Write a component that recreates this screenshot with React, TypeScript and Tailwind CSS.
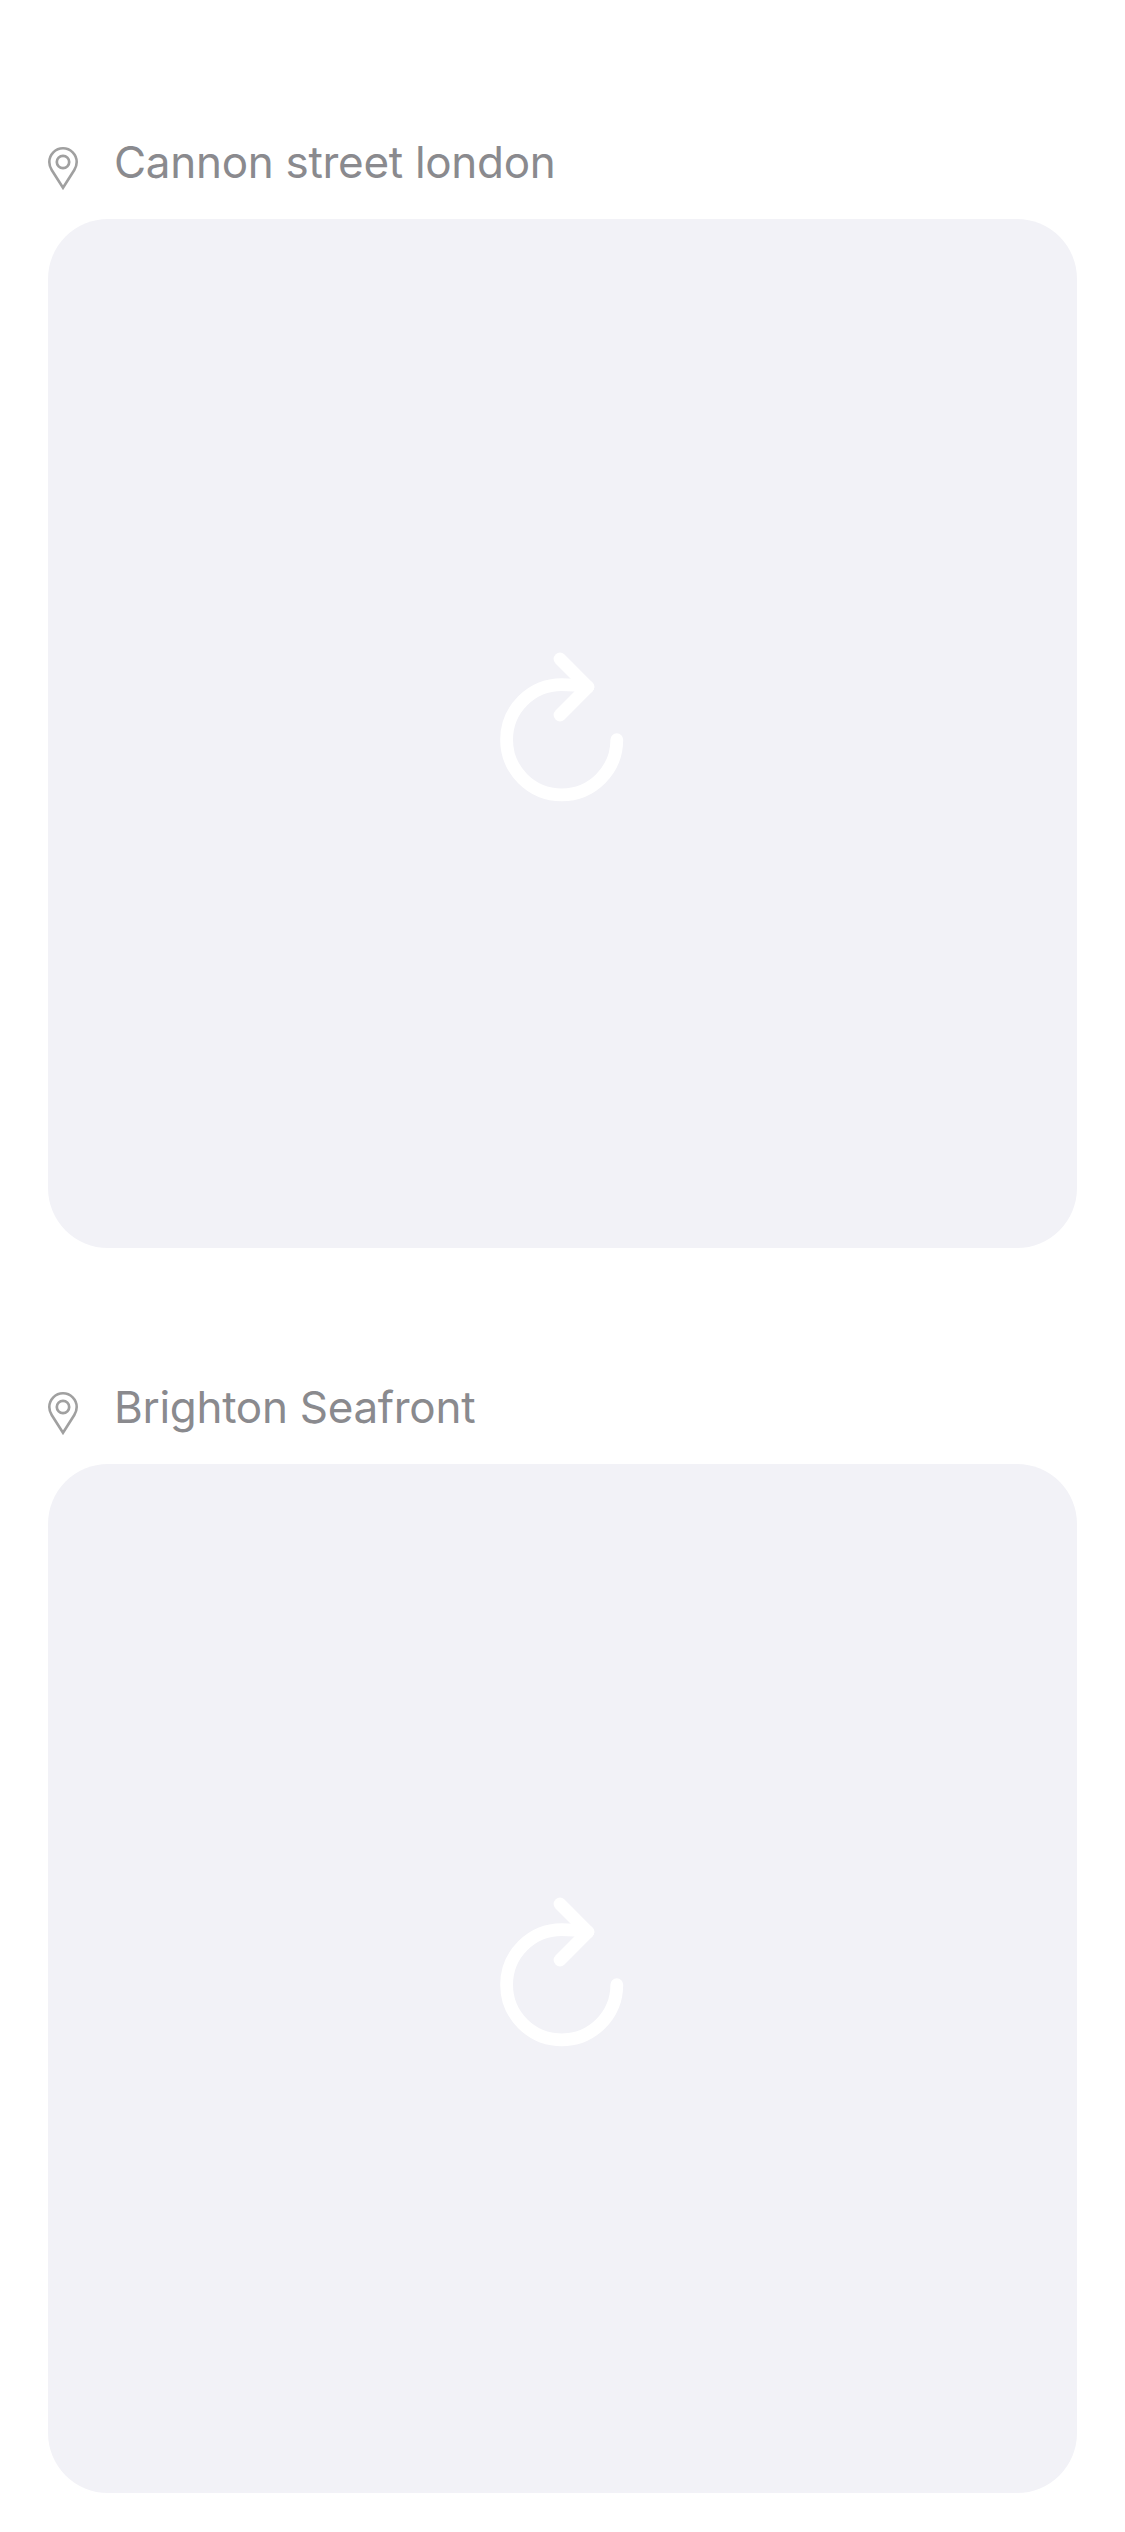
function PinIcon() {
  return (
    <svg className="mt-[3px] h-[43px] w-[30px] shrink-0" viewBox="0 0 30 43" fill="none" stroke="#a0a0a0" strokeWidth="2.6">
      <path d="M15 40.8L3.7 23C2.1 20.4 1.3 18 1.3 15A13.7 13.7 0 0 1 28.7 15C28.7 18 27.9 20.4 26.3 23Z" />
      <circle cx="15" cy="15" r="6.2" strokeWidth="2.7" />
    </svg>
  );
}

function ReloadIcon() {
  return (
    <svg
      className="h-[180px] w-[160px]"
      viewBox="0.5 0.2 160 180"
      fill="none"
      stroke="#ffffff"
      strokeWidth="12.8"
      strokeLinecap="round"
      strokeLinejoin="round"
    >
      <path d="M134.3 95.9A55.1 55.1 0 1 1 79.2 40.8C88 40.8 97 41.8 105.4 43.2" />
      <path d="M77.5 15.2L105.4 43.2L77.5 71.2" />
    </svg>
  );
}

function PlaceCard({ name }: { name: string }) {
  return (
    <section>
      <header className="flex h-[75px] items-start">
        <PinIcon />
        <h2 className="-mt-2 ml-9 text-[44px] leading-[52px] font-normal tracking-[-0.3px] whitespace-pre text-[#8a8a8e]">
          {name}
        </h2>
      </header>
      <button aria-label="Reload" className="flex h-[1029px] w-full items-center justify-center rounded-[60px] bg-[#f2f2f7]">
        <ReloadIcon />
      </button>
    </section>
  );
}

export default function App() {
  return (
    <main className="flex h-[2532px] w-[1125px] flex-col gap-[141px] overflow-hidden bg-white px-12 pt-36 font-['Inter',sans-serif]">
      <PlaceCard name="Cannon street london" />
      <PlaceCard name="Brighton Seafront" />
    </main>
  );
}
